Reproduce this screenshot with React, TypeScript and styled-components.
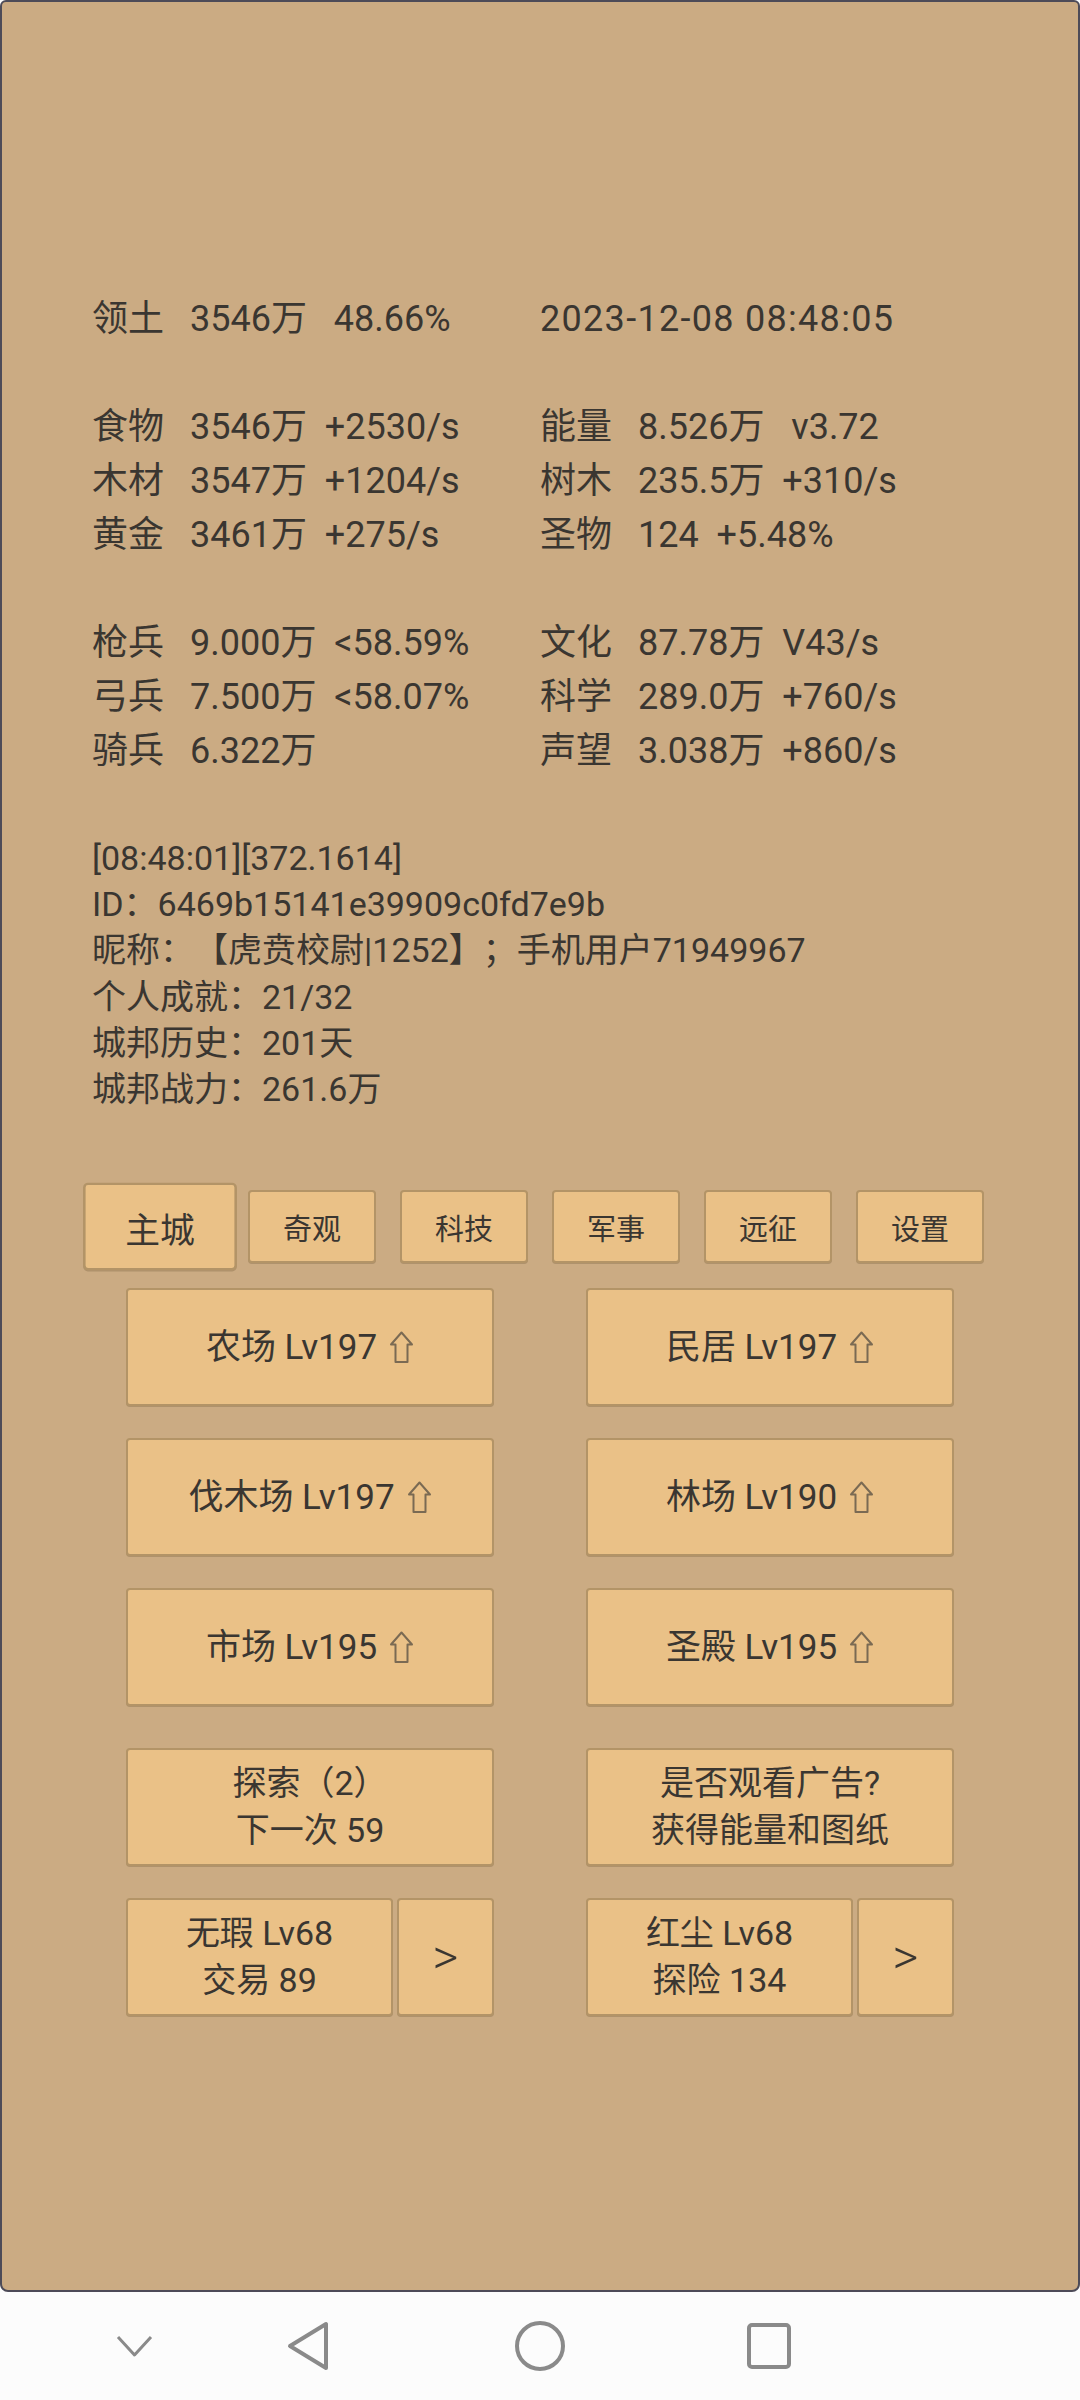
import React from "react";
import styled, { createGlobalStyle, css } from "styled-components";

const GlobalStyle = createGlobalStyle`
  html, body {
    margin: 0;
    padding: 0;
    background: #fcfcfc;
  }
`;

const Page = styled.div`
  width: 1080px;
  height: 2400px;
  display: flex;
  flex-direction: column;
  background: #fcfcfc;
  font-family: Roboto, "Noto Sans CJK SC", sans-serif;
  color: #3a3631;
  text-spacing-trim: space-all;
`;

const Screen = styled.main`
  height: 2292px;
  box-sizing: border-box;
  border: 2px solid #4d4b58;
  border-radius: 6px 6px 8px 8px;
  background: #cbab83;
  padding-top: 290px;
  display: flex;
  flex-direction: column;
`;

const StatsGrid = styled.div`
  display: grid;
  grid-template-columns: 448px auto;
  grid-auto-rows: 54px;
  padding-left: 90px;
  font-size: 36px;
  line-height: 54px;
`;

const Stat = styled.div`
  display: flex;
  white-space: pre;
`;

const Label = styled.span`
  width: 98px;
  flex-shrink: 0;
`;

const DateText = styled.span`
  letter-spacing: 1.3px;
`;

const Blank = styled.div`
  grid-column: 1 / -1;
`;

const Log = styled.div`
  margin-top: 57px;
  padding-left: 90px;
  font-size: 34px;
  line-height: 46.2px;
  white-space: pre;
`;

const Tabs = styled.nav`
  display: flex;
  justify-content: center;
  gap: 24px;
  height: 73px;
  margin-top: 78px;
`;

const panel = css`
  box-sizing: border-box;
  background: #eac187;
  border: 2px solid #b39467;
  border-radius: 4px;
  box-shadow: 0 1px 0 rgba(90, 70, 40, 0.25);
  color: #3a3631;
  display: flex;
  align-items: center;
  justify-content: center;
  text-align: center;
`;

const Tab = styled.div<{ $active?: boolean }>`
  ${panel};
  width: 128px;
  height: 73px;
  font-size: 29px;
  ${(p) =>
    p.$active &&
    css`
      transform: scale(1.2);
    `}
`;

const ButtonGrid = styled.div<{ $top: number }>`
  display: grid;
  grid-template-columns: repeat(2, 368px);
  grid-auto-rows: 118px;
  justify-content: center;
  column-gap: 92px;
  row-gap: 32px;
  margin-top: ${(p) => p.$top}px;
`;

const Button = styled.div`
  ${panel};
  gap: 13px;
  font-size: 35px;
  line-height: 47px;
`;

const TwoLine = styled.div`
  display: flex;
  flex-direction: column;
  align-items: center;
  white-space: pre;
  font-size: 34px;
`;

const Split = styled.div`
  display: grid;
  grid-template-columns: 1fr 97px;
  gap: 4px;
`;

const Arrow = styled(Button)`
  font-size: 50px;
  font-weight: 300;
`;

const NavBar = styled.footer`
  height: 108px;
  display: flex;
  align-items: center;
  padding-left: 116px;
`;

const NavIcon = styled.svg<{ $gap: number }>`
  margin-left: ${(p) => p.$gap}px;
  flex-shrink: 0;
`;

const UpArrow = () => (
  <svg width="24" height="33" viewBox="0 0 24 33">
    <path
      d="M11.5 1.5 L22 13.5 L17.5 13.5 L17.5 31 L5.5 31 L5.5 13.5 L1 13.5 Z"
      fill="none"
      stroke="#7a6a53"
      strokeWidth="2"
      strokeLinejoin="round"
    />
  </svg>
);

const stats: [string, string][][] = [
  [
    ["领土", "3546万   48.66%"],
    ["", "2023-12-08 08:48:05"],
  ],
  [],
  [
    ["食物", "3546万  +2530/s"],
    ["能量", "8.526万   v3.72"],
  ],
  [
    ["木材", "3547万  +1204/s"],
    ["树木", "235.5万  +310/s"],
  ],
  [
    ["黄金", "3461万  +275/s"],
    ["圣物", "124  +5.48%"],
  ],
  [],
  [
    ["枪兵", "9.000万  <58.59%"],
    ["文化", "87.78万  V43/s"],
  ],
  [
    ["弓兵", "7.500万  <58.07%"],
    ["科学", "289.0万  +760/s"],
  ],
  [
    ["骑兵", "6.322万"],
    ["声望", "3.038万  +860/s"],
  ],
];

const logLines = [
  "[08:48:01][372.1614]",
  "ID：6469b15141e39909c0fd7e9b",
  "昵称：【虎贲校尉|1252】；手机用户71949967",
  "个人成就：21/32",
  "城邦历史：201天",
  "城邦战力：261.6万",
];

const tabs = ["主城", "奇观", "科技", "军事", "远征", "设置"];

const buildings = [
  "农场 Lv197",
  "民居 Lv197",
  "伐木场 Lv197",
  "林场 Lv190",
  "市场 Lv195",
  "圣殿 Lv195",
];

export default function App() {
  return (
    <Page>
      <GlobalStyle />
      <Screen>
        <StatsGrid>
          {stats.map((row, i) =>
            row.length === 0 ? (
              <Blank key={i} />
            ) : (
              row.map(([label, value], j) => (
                <Stat key={`${i}-${j}`}>
                  {label ? <Label>{label}</Label> : <DateText>{value}</DateText>}
                  {label ? <span>{value}</span> : null}
                </Stat>
              ))
            )
          )}
        </StatsGrid>

        <Log>
          {logLines.map((line) => (
            <div key={line}>{line}</div>
          ))}
        </Log>

        <Tabs>
          {tabs.map((t, i) => (
            <Tab key={t} $active={i === 0}>
              {t}
            </Tab>
          ))}
        </Tabs>

        <ButtonGrid $top={25}>
          {buildings.map((b) => (
            <Button key={b}>
              <span>{b}</span>
              <UpArrow />
            </Button>
          ))}
        </ButtonGrid>

        <ButtonGrid $top={42}>
          <Button>
            <TwoLine>
              <span>探索（2）</span>
              <span>下一次 59</span>
            </TwoLine>
          </Button>
          <Button>
            <TwoLine>
              <span>是否观看广告?</span>
              <span>获得能量和图纸</span>
            </TwoLine>
          </Button>
          <Split>
            <Button>
              <TwoLine>
                <span>无瑕 Lv68</span>
                <span>交易 89</span>
              </TwoLine>
            </Button>
            <Arrow>&gt;</Arrow>
          </Split>
          <Split>
            <Button>
              <TwoLine>
                <span>红尘 Lv68</span>
                <span>探险 134</span>
              </TwoLine>
            </Button>
            <Arrow>&gt;</Arrow>
          </Split>
        </ButtonGrid>
      </Screen>

      <NavBar>
        <NavIcon $gap={0} width="37" height="22" viewBox="0 0 37 22">
          <polyline
            points="2,2 18.5,20 35,2"
            fill="none"
            stroke="#8a8a8a"
            strokeWidth="3"
            strokeLinejoin="round"
          />
        </NavIcon>
        <NavIcon $gap={134} width="42" height="50" viewBox="0 0 42 50">
          <path
            d="M39 3 L39 47 L3 25 Z"
            fill="none"
            stroke="#8a8a8a"
            strokeWidth="4"
            strokeLinejoin="round"
          />
        </NavIcon>
        <NavIcon $gap={186} width="50" height="50" viewBox="0 0 50 50">
          <circle cx="25" cy="25" r="23" fill="none" stroke="#8a8a8a" strokeWidth="4" />
        </NavIcon>
        <NavIcon $gap={182} width="44" height="46" viewBox="0 0 44 46">
          <rect x="2" y="2" width="40" height="42" rx="3" fill="none" stroke="#8a8a8a" strokeWidth="4" />
        </NavIcon>
      </NavBar>
    </Page>
  );
}
